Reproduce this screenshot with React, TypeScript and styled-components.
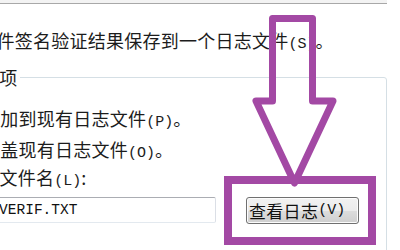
import React from "react";
import styled, { createGlobalStyle } from "styled-components";

const Global = createGlobalStyle`
  html, body { margin: 0; padding: 0; background: #ffffff; }
  body { font-family: "Noto Sans CJK SC", "Noto Sans", sans-serif; }
`;

const Frame = styled.div`
  position: relative;
  width: 400px;
  height: 250px;
  overflow: hidden;
  background: #ffffff;
  color: #1c1c1c;
  font-family: "Noto Sans CJK SC", "Noto Sans", sans-serif;
  font-size: 18px;
  letter-spacing: 0.25px;
`;

const Content = styled.div`
  display: flex;
  flex-direction: column;
  margin-left: -130px;
  width: 517px;
`;

const TopEdge = styled.div`
  height: 3px;
  background: #f3f3f3;
  border-bottom: 1px solid #a8a8a8;
`;

const CheckLabel = styled.div`
  margin-top: 26px;
  padding-left: 90px;
  height: 20px;
  line-height: 20px;
  white-space: nowrap;
`;

const Hotkey = styled.span`
  font-family: "Liberation Mono", "DejaVu Sans Mono", monospace;
  font-size: 15px;
  line-height: 1;
  letter-spacing: 0;
`;

const GroupBox = styled.fieldset`
  box-sizing: border-box;
  margin: 17px 0 0 0;
  padding: 0;
  min-width: 0;
  width: 517px;
  height: 220px;
  border: 1px solid #d5dfe5;
  border-radius: 3px;
  display: flex;
  flex-direction: column;
`;

const Legend = styled.legend`
  margin-left: 35px;
  padding: 0 2px;
  line-height: 20px;
  white-space: nowrap;
`;

const OptionRow = styled.div<{ $top: number; $indent: number }>`
  margin-top: ${(p) => p.$top}px;
  padding-left: ${(p) => p.$indent}px;
  height: 20px;
  line-height: 20px;
  white-space: nowrap;
`;

const InputRow = styled.div`
  display: flex;
  align-items: flex-start;
  gap: 30px;
  margin-top: 10px;
  padding-left: 89px;
`;

const FileInput = styled.input`
  box-sizing: border-box;
  width: 256px;
  height: 26px;
  margin: 0;
  padding: 0 0 0 12px;
  border: 1px solid;
  border-color: #abadb3 #dbdfe6 #e3e9ef #e2e3ea;
  border-radius: 2px;
  background: #ffffff;
  color: #111111;
  font-family: "Liberation Mono", "DejaVu Sans Mono", monospace;
  font-size: 14.5px;
  outline: none;
`;

const Button = styled.button`
  box-sizing: border-box;
  width: 113px;
  height: 27px;
  margin: 0;
  padding: 0 0 0 2px;
  display: flex;
  align-items: center;
  justify-content: flex-start;
  border: 1px solid #707070;
  border-radius: 3px;
  background: linear-gradient(#f2f2f2 0%, #ebebeb 50%, #dddddd 51%, #cfcfcf 100%);
  box-shadow: inset 0 0 0 1px #fcfcfc;
  color: #111111;
  font-family: "Noto Sans CJK SC", "Noto Sans", sans-serif;
  font-size: 17px;
  letter-spacing: 0.3px;
  line-height: 20px;
  white-space: nowrap;
`;

const Annotation = styled.svg`
  position: absolute;
  left: 0;
  top: 0;
  width: 400px;
  height: 250px;
  pointer-events: none;
`;

export default function App() {
  return (
    <Frame>
      <Global />
      <Content>
        <TopEdge />
        <CheckLabel>
          将文件签名验证结果保存到一个日志文件<Hotkey>(S)</Hotkey>。
        </CheckLabel>
        <GroupBox>
          <Legend>日志记录选项</Legend>
          <OptionRow $top={21} $indent={111}>
            追加到现有日志文件<Hotkey>(P)</Hotkey>。
          </OptionRow>
          <OptionRow $top={11} $indent={111}>
            覆盖现有日志文件<Hotkey>(O)</Hotkey>。
          </OptionRow>
          <OptionRow $top={8} $indent={92}>
            日志文件名<Hotkey>(L)</Hotkey>:
          </OptionRow>
          <InputRow>
            <FileInput defaultValue="SIGVERIF.TXT" readOnly />
            <Button>
              查看日志<Hotkey>(V)</Hotkey>
            </Button>
          </InputRow>
        </GroupBox>
      </Content>
      <Annotation viewBox="0 0 400 250">
        <polygon
          points="272.5,18.5 312.5,18.5 312.5,101 333,101 294.5,183 256,101 272.5,101"
          fill="none"
          stroke="#a349a4"
          strokeWidth="7"
          strokeLinejoin="round"
        />
        <rect x="228" y="180" width="144" height="61" fill="none" stroke="#a349a4" strokeWidth="8" />
      </Annotation>
    </Frame>
  );
}
